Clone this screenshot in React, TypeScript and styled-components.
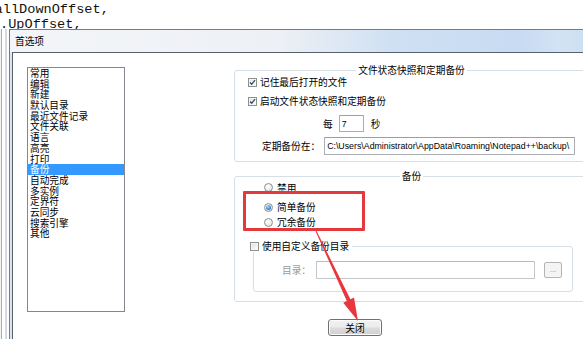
import React from 'react';
import styled, { createGlobalStyle } from 'styled-components';

const GlobalStyle = createGlobalStyle`
  html, body { margin: 0; padding: 0; background: #fff; overflow: hidden; }
  body { width: 583px; height: 339px; }
`;

const CJK = `"Noto Sans CJK SC", "Noto Sans", sans-serif`;
const LATIN = `"Liberation Sans", Arial, sans-serif`;

const Page = styled.div`
  position: relative;
  width: 583px;
  height: 339px;
  overflow: hidden;
  background: #fff;
  font-family: ${CJK};
  font-size: 9.7px;
  color: #000;
`;

const Code = styled.div`
  height: 29px;
  padding-top: 2px;
  box-sizing: border-box;
  font-family: "Liberation Mono", "Courier New", monospace;
  font-size: 13.6px;
  line-height: 15px;
  color: #111;
  white-space: pre;
`;

const CodeLine = styled.div<{ $indent: number }>`
  margin-left: ${(p) => p.$indent}px;
`;

const Desk = styled.div`
  display: flex;
  position: relative;
  z-index: 1;
`;

const Gutter = styled.div`
  width: 9px;
  flex: none;
  height: 310px;
  background: linear-gradient(90deg, #f4f4f4 0 1px, #a9adb5 1px 2px, #fff 2px 5px, #d4dae2 5px 7px, #fff 7px 9px);
`;

const Window = styled.div`
  flex: none;
  width: 600px;
  height: 320px;
  border: 1px solid #6f7d8c;
  border-bottom: none;
  background: #dbe5f1;
  display: flex;
  flex-direction: column;
`;

const TitleBar = styled.div`
  height: 22px;
  line-height: 22px;
  padding-left: 5px;
  font-size: 9.7px;
  color: #000;
  background: linear-gradient(90deg, #f3f5f8 0%, #edf0f5 45%, #cfe0f3 64%, #c7dbf2 85%, #d4e3f4 92%, #c6daf1 100%);
`;

const ClientFrame = styled.div`
  flex: 1;
  padding: 0 2px;
  display: flex;
`;

const Client = styled.div`
  flex: 1;
  background: #fff;
  border-top: 1px solid #56616d;
  border-left: 1px solid #56616d;
  display: flex;
  align-items: flex-start;
  padding: 11px 0 0 14px;
`;

const CategoryList = styled.ul`
  margin: 3px 0 0;
  padding: 0;
  list-style: none;
  flex: none;
  width: 98px;
  height: 245px;
  box-sizing: border-box;
  border: 1px solid #828790;
  background: #fff;
`;

const CategoryItem = styled.li<{ $selected?: boolean }>`
  height: 10.7px;
  line-height: 10.7px;
  padding-left: 2px;
  white-space: nowrap;
  background: ${(p) => (p.$selected ? '#3399ff' : 'transparent')};
  color: ${(p) => (p.$selected ? '#fff' : '#000')};
`;

const Panel = styled.div`
  flex: none;
  margin-left: 109px;
  width: 355px;
  display: flex;
  flex-direction: column;
  align-items: flex-start;
`;

const Group = styled.fieldset<{ $mt?: number; $pb: number }>`
  margin: ${(p) => p.$mt ?? 0}px 0 0;
  padding: 0 13px ${(p) => p.$pb}px;
  width: 355px;
  min-width: 0;
  box-sizing: border-box;
  border: 1px solid #d5dfe5;
  border-radius: 3px;
`;

const GroupTitle = styled.legend`
  margin: 0 auto;
  padding: 0 2px;
  height: 12px;
  line-height: 12px;
  white-space: nowrap;
`;

const SubGroup = styled.fieldset`
  margin: 12px 0 0 5px;
  padding: 9px 10px 12px 0;
  width: 320px;
  min-width: 0;
  box-sizing: border-box;
  border: 1px solid #d5dfe5;
  border-radius: 3px;
`;

const SubGroupTitle = styled.legend`
  margin-left: -4px;
  padding: 0 3px 0 0;
  height: 12px;
  display: flex;
  align-items: center;
  white-space: nowrap;
  background: #fff;
`;

const Row = styled.div<{ $h: number; $mt?: number; $pl?: number }>`
  display: flex;
  align-items: center;
  height: ${(p) => p.$h}px;
  margin-top: ${(p) => p.$mt ?? 0}px;
  padding-left: ${(p) => p.$pl ?? 0}px;
  white-space: nowrap;
`;

const Label = styled.span<{ $muted?: boolean; $gap?: number; $lead?: number }>`
  line-height: 12px;
  margin-left: ${(p) => p.$lead ?? 0}px;
  margin-right: ${(p) => p.$gap ?? 0}px;
  color: ${(p) => (p.$muted ? '#9a9a9a' : '#000')};
`;

const Box = styled.span`
  flex: none;
  width: 9px;
  height: 9px;
  box-sizing: border-box;
  border: 1px solid #8e8f8f;
  background: linear-gradient(135deg, #d9dcdf 0%, #f3f3f3 60%, #ffffff 100%);
  box-shadow: inset 0 0 0 1px #f6f6f6;
  margin-right: 3px;
  display: inline-flex;
  align-items: center;
  justify-content: center;
`;

const Round = styled.span`
  flex: none;
  width: 9px;
  height: 9px;
  box-sizing: border-box;
  border-radius: 50%;
  border: 1px solid #8e8f8f;
  background: radial-gradient(circle at 40% 35%, #ffffff 0%, #eaeaea 60%, #d2d2d2 100%);
  margin-right: 4px;
  display: inline-flex;
  align-items: center;
  justify-content: center;
`;

const Dot = styled.span`
  width: 5px;
  height: 5px;
  border-radius: 50%;
  background: radial-gradient(circle at 40% 35%, #b5dcfb 0%, #3f8ad6 55%, #1b5aa3 100%);
`;

const TextBox = styled.input<{ $w: number; $disabled?: boolean }>`
  width: ${(p) => p.$w}px;
  height: 100%;
  box-sizing: border-box;
  margin: 0;
  padding: 0 1px 0 2px;
  border: 1px solid ${(p) => (p.$disabled ? '#c4c8cc' : '#abadb3')};
  border-top-color: ${(p) => (p.$disabled ? '#b8bcc0' : '#9a9ea6')};
  border-radius: 1px;
  background: #fff;
  font-family: ${LATIN};
  font-size: 8.8px;
  color: #000;
  outline: none;
`;

const EllipsisButton = styled.button`
  margin-left: 9px;
  width: 18px;
  height: 16px;
  padding: 0;
  box-sizing: border-box;
  border: 1px solid #b1b5b8;
  border-radius: 2px;
  background: #f4f4f4;
  color: #8a8a8a;
  font-family: ${LATIN};
  font-size: 8px;
  line-height: 10px;
`;

const CloseButton = styled.button`
  margin: 17px 0 0 94px;
  width: 54px;
  height: 17px;
  padding: 0;
  box-sizing: border-box;
  border: 1px solid #707070;
  border-radius: 3px;
  background: linear-gradient(#f2f2f2 0%, #ebebeb 48%, #dddddd 52%, #cfcfcf 100%);
  box-shadow: inset 0 0 0 1px #fbfbfb;
  font-family: ${CJK};
  font-size: 9.7px;
  line-height: 14px;
  color: #000;
`;

const Highlight = styled.div`
  position: absolute;
  left: 243px;
  top: 191px;
  width: 122px;
  height: 40px;
  box-sizing: border-box;
  border: 3px solid #e4393c;
  border-radius: 1px;
  z-index: 2;
`;

const ArrowLayer = styled.svg`
  position: absolute;
  left: 0;
  top: 0;
  z-index: 3;
  pointer-events: none;
`;

const CheckBox = ({ checked }: { checked?: boolean }) => (
  <Box>
    {checked && (
      <svg width="7" height="7" viewBox="0 0 7 7">
        <path d="M1 3.5 L2.7 5.3 L6 1.2" stroke="#34496f" strokeWidth="1.3" fill="none" />
      </svg>
    )}
  </Box>
);

const Radio = ({ checked }: { checked?: boolean }) => <Round>{checked && <Dot />}</Round>;

const categories = [
  '常用', '编辑', '新建', '默认目录', '最近文件记录', '文件关联', '语言', '高亮', '打印',
  '备份', '自动完成', '多实例', '定界符', '云同步', '搜索引擎', '其他',
];

export default function App() {
  return (
    <>
      <GlobalStyle />
      <Page>
        <Code>
          <CodeLine $indent={-5.4}>allDownOffset,</CodeLine>
          <CodeLine $indent={0}>.UpOffset,</CodeLine>
        </Code>
        <Desk>
          <Gutter />
          <Window>
            <TitleBar>首选项</TitleBar>
            <ClientFrame>
              <Client>
                <CategoryList>
                  {categories.map((c) => (
                    <CategoryItem key={c} $selected={c === '备份'}>{c}</CategoryItem>
                  ))}
                </CategoryList>
                <Panel>
                  <Group $pb={6}>
                    <GroupTitle>文件状态快照和定期备份</GroupTitle>
                    <Row $h={12}>
                      <CheckBox checked />
                      <Label>记住最后打开的文件</Label>
                    </Row>
                    <Row $h={12} $mt={7}>
                      <CheckBox checked />
                      <Label>启动文件状态快照和定期备份</Label>
                    </Row>
                    <Row $h={17} $mt={8} $pl={75}>
                      <Label $gap={6}>每</Label>
                      <TextBox $w={25} value="7" readOnly />
                      <Label $lead={7}>秒</Label>
                    </Row>
                    <Row $h={18} $mt={5} $pl={14}>
                      <Label $gap={4}>定期备份在：</Label>
                      <TextBox $w={256} value={'C:\\Users\\Administrator\\AppData\\Roaming\\Notepad++\\backup\\'} readOnly />
                    </Row>
                  </Group>
                  <Group $mt={8} $pb={9}>
                    <GroupTitle>备份</GroupTitle>
                    <Row $h={11} $pl={16}>
                      <Radio />
                      <Label>禁用</Label>
                    </Row>
                    <Row $h={12} $mt={8} $pl={16}>
                      <Radio checked />
                      <Label>简单备份</Label>
                    </Row>
                    <Row $h={12} $mt={3} $pl={16}>
                      <Radio />
                      <Label>冗余备份</Label>
                    </Row>
                    <SubGroup>
                      <SubGroupTitle>
                        <CheckBox />
                        <Label>使用自定义备份目录</Label>
                      </SubGroupTitle>
                      <Row $h={18} $pl={28}>
                        <Label $muted $gap={5}>目录：</Label>
                        <TextBox $w={219} $disabled value="" readOnly />
                        <EllipsisButton>...</EllipsisButton>
                      </Row>
                    </SubGroup>
                  </Group>
                  <CloseButton>关闭</CloseButton>
                </Panel>
              </Client>
            </ClientFrame>
          </Window>
        </Desk>
        <Highlight />
        <ArrowLayer width="583" height="339" viewBox="0 0 583 339">
          <polygon
            points="316.45,230.79 350.4,299.25 354,297.5 358,321 343.2,302.7 346.8,300.95 315.55,231.21"
            fill="#e8383d"
          />
        </ArrowLayer>
      </Page>
    </>
  );
}
